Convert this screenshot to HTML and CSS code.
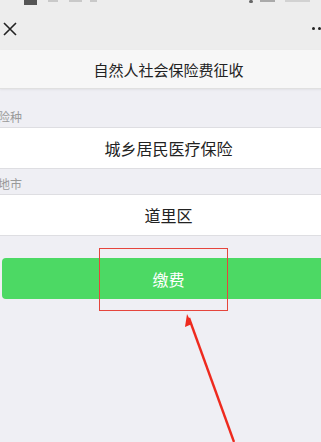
FILE: index.html
```html
<!DOCTYPE html>
<html lang="zh">
<head>
<meta charset="utf-8">
<title>自然人社会保险费征收</title>
<link rel="stylesheet" href="styles.css">
</head>
<body>
<div class="page">
  <div class="topbar">
    <div class="status">
      <span class="sb sb-sig"></span>
      <span class="sb sb-a"></span>
      <span class="sb sb-b"></span>
      <span class="sb sb-c"></span>
      <span class="spacer"></span>
      <span class="sb sb-dot"></span>
      <span class="sb sb-bat"></span>
      <span class="sb sb-time"></span>
    </div>
    <div class="nav">
      <svg class="close" width="14" height="14" viewBox="0 0 14 14"><path d="M1 1 L13 13 M13 1 L1 13" stroke="#222" stroke-width="1.6" fill="none"/></svg>
      <div class="dots"><span></span><span></span><span></span></div>
    </div>
  </div>
  <div class="titlebar">自然人社会保险费征收</div>
  <div class="label label-first">险种</div>
  <div class="row">城乡居民医疗保险</div>
  <div class="label label-next">地市</div>
  <div class="row">道里区</div>
  <div class="btn-wrap"><div class="btn">缴费</div></div>
</div>
<div class="mark-box"></div>
<svg class="arrow" width="321" height="442" viewBox="0 0 321 442">
  <path d="M189 318 L234 442" stroke="#ee2a1e" stroke-width="2.4" fill="none"/>
  <path d="M187 314 L185 327 L192 324 Z" fill="#ee2a1e"/>
</svg>
</body>
</html>
```
FILE: styles.css
```css
html, body {
  margin: 0;
  padding: 0;
}
body {
  background: #efeff4;
  width: 321px;
  height: 442px;
  overflow: hidden;
  position: relative;
  font-family: "Noto Sans CJK SC", "Noto Sans", sans-serif;
}
.page {
  width: 337px;
}
.topbar {
  background: #ededed;
  height: 50px;
  display: flex;
  flex-direction: column;
}
.status {
  height: 6px;
  display: flex;
  align-items: flex-start;
  padding-left: 24px;
}
.sb {
  display: block;
  background: #c9c9c9;
  height: 2px;
}
.sb-sig { width: 13px; height: 5px; background: #555; }
.sb-a { width: 10px; margin-left: 11px; }
.sb-b { width: 13px; margin-left: 11px; }
.sb-c { width: 7px; margin-left: 8px; }
.spacer { flex: 1; }
.sb-dot { width: 4px; height: 3px; background: #666; border-radius: 2px; }
.sb-bat { width: 15px; margin-left: 7px; background: #aaa; }
.sb-time { width: 25px; margin-left: 10px; margin-right: 27px; background: #d2d2d2; }
.nav {
  flex: 1;
  display: flex;
  align-items: center;
  justify-content: space-between;
  padding: 0 10px 0 3px;
}
.close {
  display: block;
  margin-top: 2px;
}
.dots {
  display: flex;
  gap: 3px;
}
.dots span {
  width: 3px;
  height: 3px;
  border-radius: 50%;
  background: #222;
}
.titlebar {
  background: #f7f7f7;
  height: 38px;
  display: flex;
  align-items: center;
  justify-content: center;
  font-size: 15px;
  color: #222;
  border-bottom: 1px solid #e0e0e0;
  box-shadow: 0 1px 2px rgba(0, 0, 0, 0.06);
}
.label {
  box-sizing: border-box;
  display: flex;
  align-items: center;
  font-size: 12px;
  line-height: 17px;
  color: #9a9a9a;
  margin-left: -2px;
  border-bottom: 1px solid #dedee2;
}
.label-first {
  height: 39px;
  align-items: flex-end;
  padding-bottom: 2px;
}
.label-next {
  height: 26px;
  padding-top: 3px;
}
.row {
  background: #fff;
  height: 40px;
  display: flex;
  align-items: center;
  justify-content: center;
  font-size: 16px;
  color: #222;
  border-bottom: 1px solid #dedee2;
}
.btn-wrap {
  padding: 22px 2px 0;
}
.btn {
  background: #4cd964;
  height: 41px;
  border-radius: 4px;
  display: flex;
  align-items: center;
  justify-content: center;
  color: #fff;
  font-size: 16px;
}
.mark-box {
  position: absolute;
  left: 99px;
  top: 248px;
  width: 127px;
  height: 61px;
  border: 1.5px solid #e5453c;
}
.arrow {
  position: absolute;
  left: 0;
  top: 0;
}
```
